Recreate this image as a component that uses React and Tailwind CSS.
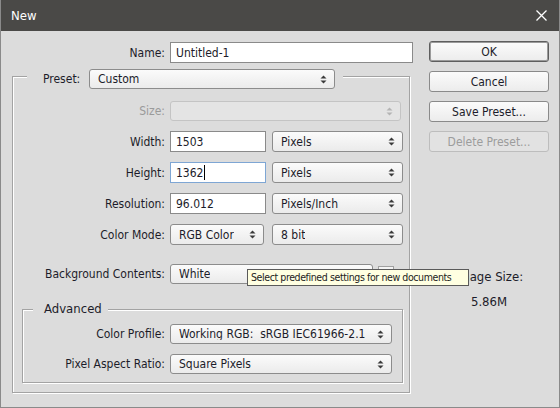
import React from 'react'

const font = { fontFamily: '"DejaVu Sans Condensed", "DejaVu Sans", Tahoma, sans-serif' }

function Arrows({ disabled }) {
  const c = disabled ? '#b4b4b4' : '#3a3a3a'
  return (
    <svg width="7" height="9" viewBox="0 0 7 9" className="shrink-0">
      <path d="M3.5 0.5 L6.5 3.5 L0.5 3.5 Z" fill={c} />
      <path d="M0.5 5.5 L6.5 5.5 L3.5 8.5 Z" fill={c} />
    </svg>
  )
}

function Select({ value, w, h = 'h-[21px]', disabled }) {
  return (
    <div
      className={`${w} ${h} flex items-center justify-between rounded-[3px] border pl-[8px] pr-[7px] ${
        disabled
          ? 'border-[#c4c4c4] bg-[#e4e4e4]'
          : 'border-[#8c8c8c] bg-gradient-to-b from-[#fbfbfb] to-[#ebebeb]'
      }`}
    >
      <span className="truncate text-[#1c1c2a] whitespace-pre">{value}</span>
      <Arrows disabled={disabled} />
    </div>
  )
}

function Input({ value, w, focused }) {
  return (
    <div
      className={`${w} h-[21px] flex items-center border bg-white pl-[5px] text-[#1c1c2a] ${
        focused ? 'border-[#7ea6d4]' : 'border-[#8a8a8a]'
      }`}
    >
      {value}
      {focused && <span className="ml-[1px] inline-block h-[15px] w-[1px] bg-black" />}
    </div>
  )
}

function Row({ label, labelW, mt, children, muted }) {
  return (
    <div className={`flex items-center gap-[5px] ${mt}`}>
      <div className={`${labelW} text-right ${muted ? 'text-[#9a9a9a]' : 'text-[#1c1c2a]'}`}>{label}</div>
      {children}
    </div>
  )
}

function Button({ children, primary, disabled }) {
  return (
    <div
      className={`h-[21px] w-[120px] flex items-center justify-center rounded-[3px] border ${
        primary
          ? 'border-[#5e5e5e] shadow-[inset_0_0_0_1px_#9a9a9a]'
          : disabled
          ? 'border-[#bdbdbd]'
          : 'border-[#8a8a8a]'
      } ${disabled ? 'bg-[#e2e2e2] text-[#9c9c9c]' : 'bg-gradient-to-b from-[#fbfbfb] to-[#ececec] text-[#1c1c2a]'}`}
    >
      {children}
    </div>
  )
}

export default function App() {
  return (
    <div
      className="relative w-[560px] h-[408px] overflow-hidden bg-[#dcdcdc] border-x border-b border-[#8a8a8a] text-[12px] leading-none"
      style={font}
    >
      {/* title bar */}
      <div className="h-[31px] flex items-center justify-between bg-[#4a4947] pl-[10px] pr-[12px] text-[13px] text-white">
        <span>New</span>
        <svg width="11" height="11" viewBox="0 0 11 11">
          <path d="M0.5 0.5 L10.5 10.5 M10.5 0.5 L0.5 10.5" stroke="#ffffff" strokeWidth="1.3" />
        </svg>
      </div>

      <div className="flex">
        {/* left */}
        <div className="w-[428px] pt-[11px]">
          <Row label="Name:" labelW="w-[164px]">
            <Input value="Untitled-1" w="w-[243px]" />
          </Row>

          <fieldset className="ml-[11px] w-[398px] h-[330px] border border-[#a3a3a3] shadow-[inset_1px_1px_0_#fff,1px_1px_0_#fff]">
            <legend className="ml-[14px] pl-[16px] pr-[8px] pt-[6px] bg-[#dcdcdc]">
              <div className="flex items-center">
                <span className="w-[46px] text-[#1c1c2a]">Preset:</span>
                <Select value="Custom" w="w-[246px]" h="h-[20px]" />
              </div>
            </legend>

            <Row label="Size:" labelW="w-[152px]" mt="mt-[12px]" muted>
              <Select value="" w="w-[231px]" h="h-[20px]" disabled />
            </Row>
            <Row label="Width:" labelW="w-[152px]" mt="mt-[10px]">
              <Input value="1503" w="w-[96px]" />
              <div className="ml-[1px]">
                <Select value="Pixels" w="w-[131px]" />
              </div>
            </Row>
            <Row label="Height:" labelW="w-[152px]" mt="mt-[10px]">
              <Input value="1362" w="w-[96px]" focused />
              <div className="ml-[1px]">
                <Select value="Pixels" w="w-[131px]" />
              </div>
            </Row>
            <Row label="Resolution:" labelW="w-[152px]" mt="mt-[10px]">
              <Input value="96.012" w="w-[96px]" />
              <div className="ml-[1px]">
                <Select value="Pixels/Inch" w="w-[131px]" />
              </div>
            </Row>
            <Row label="Color Mode:" labelW="w-[152px]" mt="mt-[10px]">
              <Select value="RGB Color" w="w-[94px]" />
              <div className="ml-[3px]">
                <Select value="8 bit" w="w-[131px]" />
              </div>
            </Row>
            <Row label="Background Contents:" labelW="w-[152px]" mt="mt-[19px]">
              <Select value="White" w="w-[203px]" h="h-[20px]" />
              <div className="h-[18px] w-[16px] self-end border border-[#a0a0a0] bg-[#f4f4f4]" />
            </Row>

            <fieldset className="mt-[17px] ml-[9px] w-[381px] h-[82px] border border-[#a3a3a3] shadow-[inset_1px_1px_0_#fff,1px_1px_0_#fff]">
              <legend className="ml-[10px] pl-[11px] pr-[6px] bg-[#dcdcdc] text-[#1c1c2a] text-[13px] leading-[16px]">
                Advanced
              </legend>
              <Row label="Color Profile:" labelW="w-[142px]" mt="mt-[7px]">
                <Select value="Working RGB:  sRGB IEC61966-2.1" w="w-[222px]" h="h-[20px]" />
              </Row>
              <Row label="Pixel Aspect Ratio:" labelW="w-[142px]" mt="mt-[10px]">
                <Select value="Square Pixels" w="w-[222px]" h="h-[20px]" />
              </Row>
            </fieldset>
          </fieldset>
        </div>

        {/* right */}
        <div className="pt-[10px] w-[120px] flex flex-col gap-[9px]">
          <Button primary>OK</Button>
          <Button>Cancel</Button>
          <Button>Save Preset...</Button>
          <Button disabled>Delete Preset...</Button>
          <div className="mt-[109px] text-center text-[13px] text-[#1c1c2a]">Image Size:</div>
          <div className="mt-[3px] text-center text-[13px] text-[#1c1c2a]">5.86M</div>
        </div>
      </div>

      {/* tooltip */}
      <div className="absolute left-[246px] top-[269px] h-[17px] w-[222px] border border-[#5a5a5a] bg-[#ffffe1] pl-[3px] flex items-center text-[10.5px] tracking-[-0.4px] text-[#1c1c1c] whitespace-nowrap overflow-hidden">
        Select predefined settings for new documents
      </div>
    </div>
  )
}
